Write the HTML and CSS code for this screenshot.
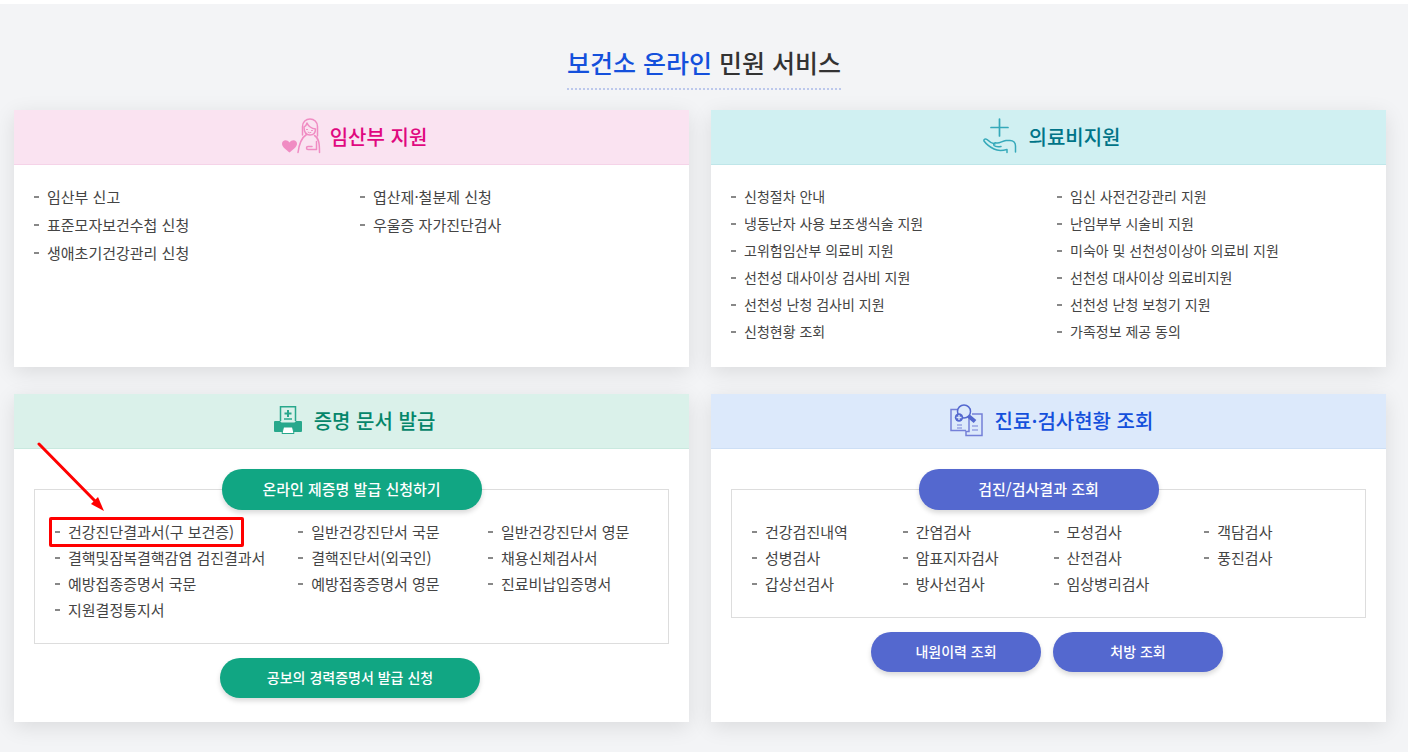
FILE: index.html
```html
<!DOCTYPE html>
<html lang="ko">
<head>
  <meta charset="UTF-8">
  <meta name="viewport" content="width=device-width, initial-scale=1">
  <title>보건소 온라인 민원 서비스</title>
  <link rel="stylesheet" href="styles.css">
</head>
<body>

  <main class="service">
    <h1 class="title"><span>보건소 온라인</span> 민원 서비스</h1>

    <div class="cards">

      <!-- 임산부 지원 -->
      <section class="card pink">
        <h2>
          <svg width="40" height="36" viewBox="0 0 40 36" fill="none" stroke="#f08cc3" stroke-width="1.5" stroke-linecap="round" stroke-linejoin="round">
            <path d="M7.500 34.500C4 31.500 0 29 0 25.700C0 22 5 21 7.500 24.500C10 21 15 22 15 25.700C15 29 11 31.500 7.500 34.500Z" fill="#f08cc3" stroke="none"/>
            <path d="M20.500 17V8.500C20.500 4 24 1 28 1S35.500 4 35.500 8.500V18"/>
            <path d="M22 9C23.500 8.500 24.500 7 25 5C26.500 8.500 30 10.500 33.500 11C33.500 14.500 31.500 17 28 17C24 17 22 14 22 9Z"/>
            <path d="M24.500 11.500H25.500M29.500 12.500H30.500M26 14.200Q27.500 15.500 29 14.500" stroke-width="1"/>
            <path d="M24.500 16.500C19 20 17 27 16 34.500"/>
            <path d="M32.500 17.500C37 20 37.500 26 37.500 34.500"/>
            <path d="M34.500 23.500V31.500H26C24 31.500 24 28.500 26 28.500H30"/>
          </svg>
          임산부 지원
        </h2>
        <ul class="list">
          <li><a href="#">임산부 신고</a></li>
          <li><a href="#">엽산제·철분제 신청</a></li>
          <li><a href="#">표준모자보건수첩 신청</a></li>
          <li><a href="#">우울증 자가진단검사</a></li>
          <li><a href="#">생애초기건강관리 신청</a></li>
        </ul>
      </section>

      <!-- 의료비지원 -->
      <section class="card teal">
        <h2>
          <svg width="34" height="36" viewBox="0 0 34 36" fill="none" stroke="#35a9ba" stroke-width="1.500" stroke-linecap="round" stroke-linejoin="round">
            <path d="M16.500 1V18M8 9.500H25" stroke-width="1.700"/>
            <path d="M24 34.500V31.500C20 32.500 14 32.500 11 31C7 29 3.500 26.500 1 23C.5 21 2.500 20.500 4 21.500C6.500 24 9 25.500 12 26"/>
            <path d="M18 28.500C14.500 29 12 28.500 11 27.500C10 25.500 11.500 24.500 13.500 25C17 25.500 19 23 23 22.500H27C30.500 22.500 32.500 25 32.500 28V34"/>
          </svg>
          의료비지원
        </h2>
        <ul class="list small">
          <li><a href="#">신청절차 안내</a></li>
          <li><a href="#">임신 사전건강관리 지원</a></li>
          <li><a href="#">냉동난자 사용 보조생식술 지원</a></li>
          <li><a href="#">난임부부 시술비 지원</a></li>
          <li><a href="#">고위험임산부 의료비 지원</a></li>
          <li><a href="#">미숙아 및 선천성이상아 의료비 지원</a></li>
          <li><a href="#">선천성 대사이상 검사비 지원</a></li>
          <li><a href="#">선천성 대사이상 의료비지원</a></li>
          <li><a href="#">선천성 난청 검사비 지원</a></li>
          <li><a href="#">선천성 난청 보청기 지원</a></li>
          <li><a href="#">신청현황 조회</a></li>
          <li><a href="#">가족정보 제공 동의</a></li>
        </ul>
      </section>

      <!-- 증명 문서 발급 -->
      <section class="card green">
        <h2>
          <svg width="28" height="28" viewBox="0 0 28 28" fill="none" stroke="#28a88c" stroke-width="1.500">
            <path d="M6.500 15V.8H21.500V15"/>
            <path d="M14 4V11M10.500 7.500H17.500" stroke-width="2"/>
            <path d="M10 13H18"/>
            <path d="M1 15H6L7.500 16.500H20.500L22 15H27Q28 15 28 16V25Q28 26 27 26H1Q0 26 0 25V16Q0 15 1 15Z" fill="#28a88c" stroke="none"/>
            <path d="M9.500 21H18.500L20 27.500H8Z" fill="#fff" stroke-width="1"/>
          </svg>
          증명 문서 발급
        </h2>
        <div class="box">
          <button type="button" class="btn top">온라인 제증명 발급 신청하기</button>
          <ul class="list three">
            <li class="marked">
              <a href="#">건강진단결과서(구 보건증)</a>
              <svg class="arrow" width="70" height="72" viewBox="0 0 70 72">
                <path d="M2 2L60 61" stroke="#f00" stroke-width="3" stroke-linecap="round"/>
                <path d="M67 69L54 62L61 55Z" fill="#f00"/>
              </svg>
            </li>
            <li><a href="#">일반건강진단서 국문</a></li>
            <li><a href="#">일반건강진단서 영문</a></li>
            <li><a href="#">결핵및잠복결핵감염 검진결과서</a></li>
            <li><a href="#">결핵진단서(외국인)</a></li>
            <li><a href="#">채용신체검사서</a></li>
            <li><a href="#">예방접종증명서 국문</a></li>
            <li><a href="#">예방접종증명서 영문</a></li>
            <li><a href="#">진료비납입증명서</a></li>
            <li><a href="#">지원결정통지서</a></li>
          </ul>
        </div>
        <div class="btns">
          <button type="button" class="btn wide">공보의 경력증명서 발급 신청</button>
        </div>
      </section>

      <!-- 진료·검사현황 조회 -->
      <section class="card blue">
        <h2>
          <svg width="33" height="33" viewBox="0 0 33 33" fill="none" stroke="#7480d8" stroke-width="1.500">
            <path d="M7 5.500H1V26.500H16M20 5.500H21"/>
            <path d="M22 10H32V31.500H16V27.500H19V13"/>
            <path d="M7 21H12M7 24H12M22 22H28M22 26H28" stroke-width="1.200"/>
            <circle cx="14" cy="7.500" r="6.500" fill="#dce9fb" stroke="#5468cf"/>
            <circle cx="9" cy="13.500" r="4.200" fill="#5468cf" stroke="none"/>
            <path d="M9 11V16M6.500 13.500H11.500" stroke="#dce9fb" stroke-width="1.300"/>
            <path d="M18.500 12L25 17.500" stroke="#5468cf" stroke-width="4"/>
          </svg>
          진료·검사현황 조회
        </h2>
        <div class="box">
          <button type="button" class="btn top narrow">검진/검사결과 조회</button>
          <ul class="list four">
            <li><a href="#">건강검진내역</a></li>
            <li><a href="#">간염검사</a></li>
            <li><a href="#">모성검사</a></li>
            <li><a href="#">객담검사</a></li>
            <li><a href="#">성병검사</a></li>
            <li><a href="#">암표지자검사</a></li>
            <li><a href="#">산전검사</a></li>
            <li><a href="#">풍진검사</a></li>
            <li><a href="#">갑상선검사</a></li>
            <li><a href="#">방사선검사</a></li>
            <li><a href="#">임상병리검사</a></li>
          </ul>
        </div>
        <div class="btns">
          <button type="button" class="btn">내원이력 조회</button>
          <button type="button" class="btn">처방 조회</button>
        </div>
      </section>

    </div>
  </main>

</body>
</html>
```
FILE: styles.css
```css
*, *::before, *::after { box-sizing: border-box; }
body {
  margin: 0;
  background: #f3f4f6;
  border-top: 4px solid #fff;
  font-family: "Noto Sans CJK KR", sans-serif;
  color: #444;
}
ul { list-style: none; margin: 0; padding: 0; }
a { color: inherit; text-decoration: none; }
a:hover { text-decoration: underline; }

.service { padding: 38px 0 31px; }
.title {
  width: fit-content;
  margin: 0 auto 20px;
  padding-bottom: 6px;
  font-size: 25px;
  line-height: 40px;
  font-weight: 500;
  color: #333;
  border-bottom: 2px dotted #bcc8ec;
}
.title span { color: #1450dc; }

.cards {
  display: grid;
  grid-template-columns: 1fr 1fr;
  gap: 27px 22px;
  padding: 0 22px 0 14px;
}
.card { background: #fff; box-shadow: 0 5px 20px rgba(0, 0, 0, 0.1); }
.card h2 {
  display: flex;
  align-items: center;
  justify-content: center;
  gap: 12px;
  height: 55px;
  margin: 0;
  padding: 0 0 2px 6px;
  font-size: 20px;
  font-weight: 500;
  border-bottom: 1px solid;
}
.pink h2 { gap: 8px; background: #fae3f1; border-color: #f5d3e8; color: #e0087f; }
.teal h2 { background: #d0f0f2; border-color: #bfe6e9; color: #007488; }
.green h2 { background: #daf1ea; border-color: #c9e9df; color: #05866a; }
.blue h2 { background: #dce9fb; border-color: #cddff5; color: #1450dc; }

/* lists */
.list {
  display: grid;
  grid-template-columns: 1fr 1fr;
  padding: 18px 3px 22px 20px;
  font-size: 15px;
  line-height: 28px;
}
.list li { position: relative; padding-left: 13px; white-space: nowrap; }
.list li::before {
  content: "";
  position: absolute;
  left: 0;
  top: 50%;
  width: 5px;
  height: 2px;
  margin-top: -1px;
  background: #888;
}
.small { font-size: 14px; line-height: 27px; }
.three, .four { padding: 29px 20px 20px; line-height: 26px; }
.three { grid-template-columns: 41% 32% 27%; }
.four { grid-template-columns: repeat(4, 1fr); padding-right: 10px; }

/* outlined box with a button on its top edge */
.box { position: relative; margin: 40px 20px 14px; border: 1px solid #ddd; }
.btn {
  width: 170px;
  height: 40px;
  padding: 0 0 2px;
  border: 0;
  border-radius: 20px;
  background: #5468cf;
  box-shadow: 0 3px 5px rgba(0, 0, 0, 0.15);
  color: #fff;
  font-family: inherit;
  font-size: 14px;
  font-weight: 500;
  cursor: pointer;
}
.green .btn { background: #11a683; }
.btn.wide { width: 260px; }
.btn.top {
  position: absolute;
  top: -21px;
  left: 50%;
  width: 260px;
  height: 41px;
  margin-left: -130px;
  font-size: 15px;
}
.btn.narrow { width: 240px; }
.btns { display: flex; justify-content: center; gap: 12px; padding: 0 3px 24px 0; }

/* highlighted item */
.marked::after {
  content: "";
  position: absolute;
  left: -6px;
  top: -2px;
  width: 195px;
  height: 30px;
  border: 3px solid #f00;
  border-radius: 2px;
}
.arrow { position: absolute; left: -18px; top: -77px; }
```
